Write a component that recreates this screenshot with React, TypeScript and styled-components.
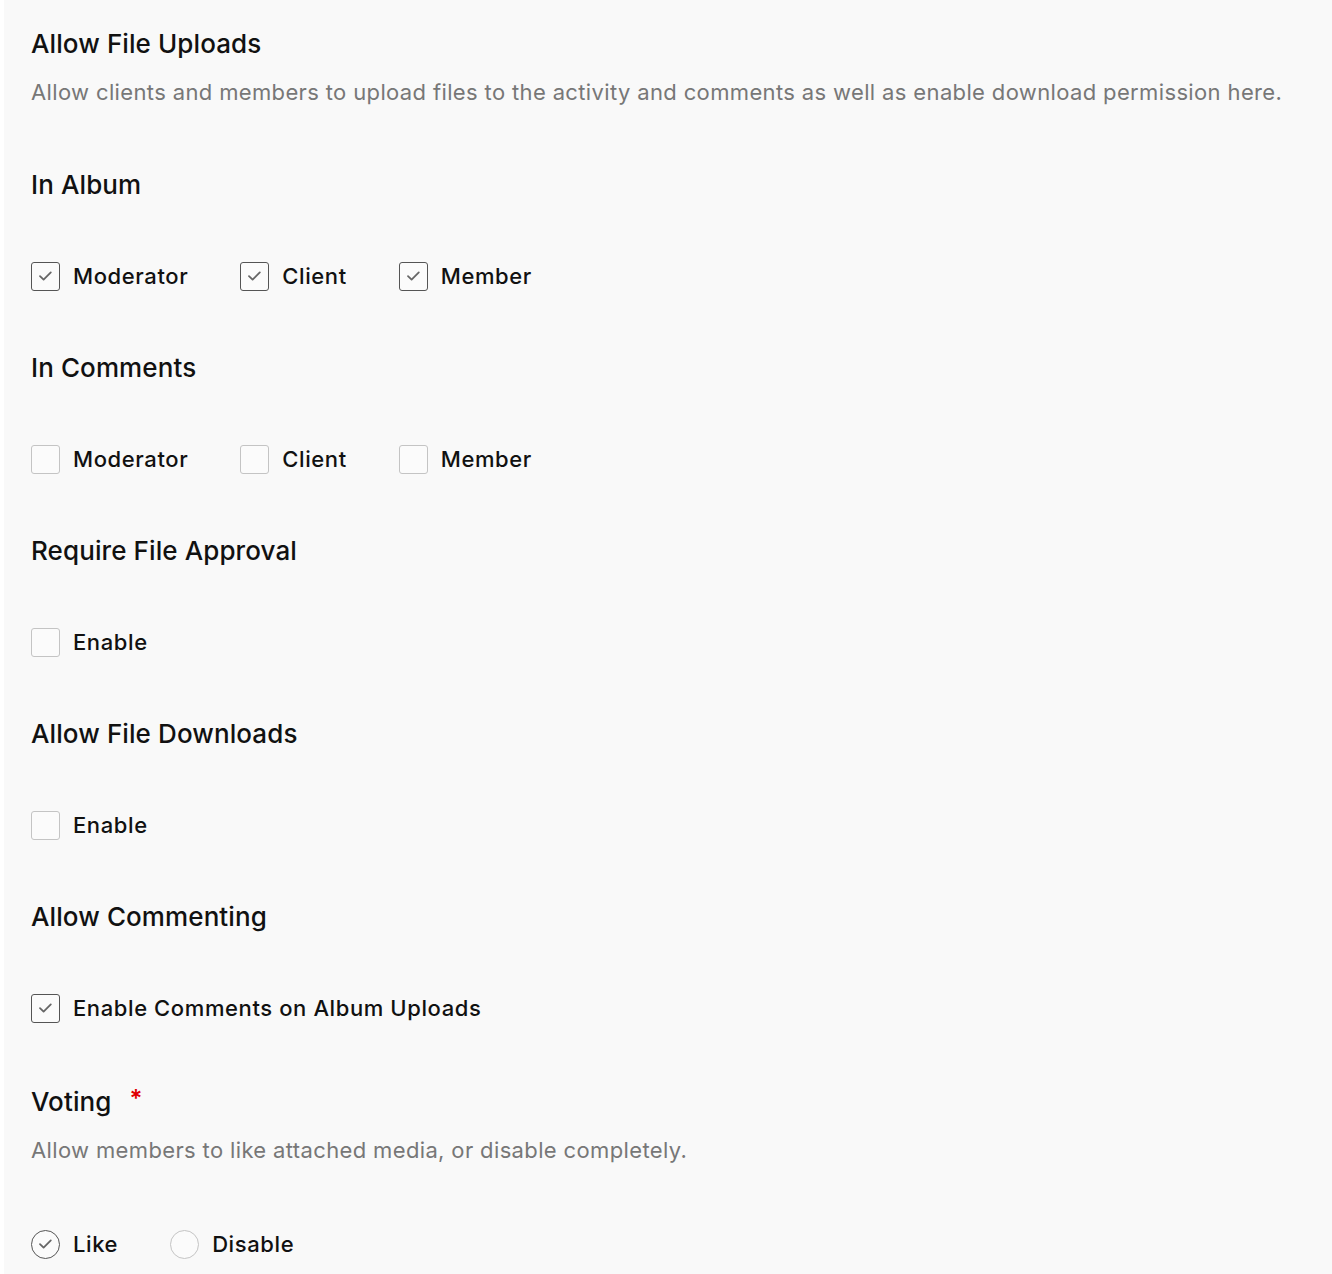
import React from 'react';
import styled, { createGlobalStyle } from 'styled-components';

const GlobalStyle = createGlobalStyle`
  html, body {
    margin: 0;
    padding: 0;
    background: #ffffff;
  }
  body {
    font-family: Inter, "Noto Sans", "Liberation Sans", sans-serif;
    -webkit-font-smoothing: antialiased;
  }
`;

const Panel = styled.div`
  margin-left: 4px;
  min-height: 1274px;
  background: #f9f9f9;
  padding: 24px 0 0 27px;
  box-sizing: border-box;
  display: flex;
  flex-direction: column;
`;

const Group = styled.section<{ $space?: number }>`
  display: flex;
  flex-direction: column;
  margin-bottom: ${p => p.$space ?? 52}px;
`;

const Heading = styled.h3`
  margin: 0;
  height: 40px;
  line-height: 40px;
  font-size: 26px;
  font-weight: 500;
  color: #111;
  letter-spacing: 0.1px;
  display: flex;
  align-items: center;
`;

const Required = styled.span`
  color: #e00000;
  font-size: 24px;
  font-weight: 600;
  margin-left: 18px;
  margin-top: -6px;
`;

const Description = styled.p`
  margin: 8px 0 0;
  height: 40px;
  line-height: 40px;
  font-size: 22px;
  font-weight: 400;
  color: #777;
  letter-spacing: 0.36px;
`;

const Options = styled.div<{ $gap?: number }>`
  display: flex;
  align-items: center;
  height: 40px;
  margin-top: ${p => p.$gap ?? 51}px;
`;

const Option = styled.label`
  display: flex;
  align-items: center;
  margin-right: 52px;
  font-size: 22px;
  font-weight: 500;
  color: #111;
  letter-spacing: 0.6px;
  cursor: pointer;
`;

const Box = styled.span<{ $checked: boolean; $round?: boolean }>`
  width: 29px;
  height: 29px;
  box-sizing: border-box;
  border: 1.5px solid ${p => (p.$checked ? '#555' : '#c4c4c4')};
  border-radius: ${p => (p.$round ? '50%' : '3px')};
  background: #fbfbfb;
  display: flex;
  align-items: center;
  justify-content: center;
  margin-right: 13px;
  flex-shrink: 0;
`;

const Tick = () => (
  <svg width="15" height="12" viewBox="0 0 15 12" fill="none">
    <path d="M2 6.2 L5.6 9.6 L12.8 2.4" stroke="#666" strokeWidth="1.8" strokeLinecap="round" strokeLinejoin="round" />
  </svg>
);

interface ChoiceProps {
  label: string;
  checked?: boolean;
  round?: boolean;
}

const Choice = ({ label, checked = false, round = false }: ChoiceProps) => (
  <Option>
    <Box $checked={checked} $round={round}>{checked && <Tick />}</Box>
    {label}
  </Option>
);

export default function App() {
  return (
    <>
      <GlobalStyle />
      <Panel>
        <Group $space={53}>
          <Heading>Allow File Uploads</Heading>
          <Description>
            Allow clients and members to upload files to the activity and comments as well as enable download permission here.
          </Description>
        </Group>

        <Group>
          <Heading>In Album</Heading>
          <Options>
            <Choice label="Moderator" checked />
            <Choice label="Client" checked />
            <Choice label="Member" checked />
          </Options>
        </Group>

        <Group>
          <Heading>In Comments</Heading>
          <Options>
            <Choice label="Moderator" />
            <Choice label="Client" />
            <Choice label="Member" />
          </Options>
        </Group>

        <Group>
          <Heading>Require File Approval</Heading>
          <Options>
            <Choice label="Enable" />
          </Options>
        </Group>

        <Group>
          <Heading>Allow File Downloads</Heading>
          <Options>
            <Choice label="Enable" />
          </Options>
        </Group>

        <Group $space={54}>
          <Heading>Allow Commenting</Heading>
          <Options>
            <Choice label="Enable Comments on Album Uploads" checked />
          </Options>
        </Group>

        <Group>
          <Heading>
            Voting<Required>*</Required>
          </Heading>
          <Description>Allow members to like attached media, or disable completely.</Description>
          <Options $gap={54}>
            <Choice label="Like" checked round />
            <Choice label="Disable" round />
          </Options>
        </Group>
      </Panel>
    </>
  );
}
